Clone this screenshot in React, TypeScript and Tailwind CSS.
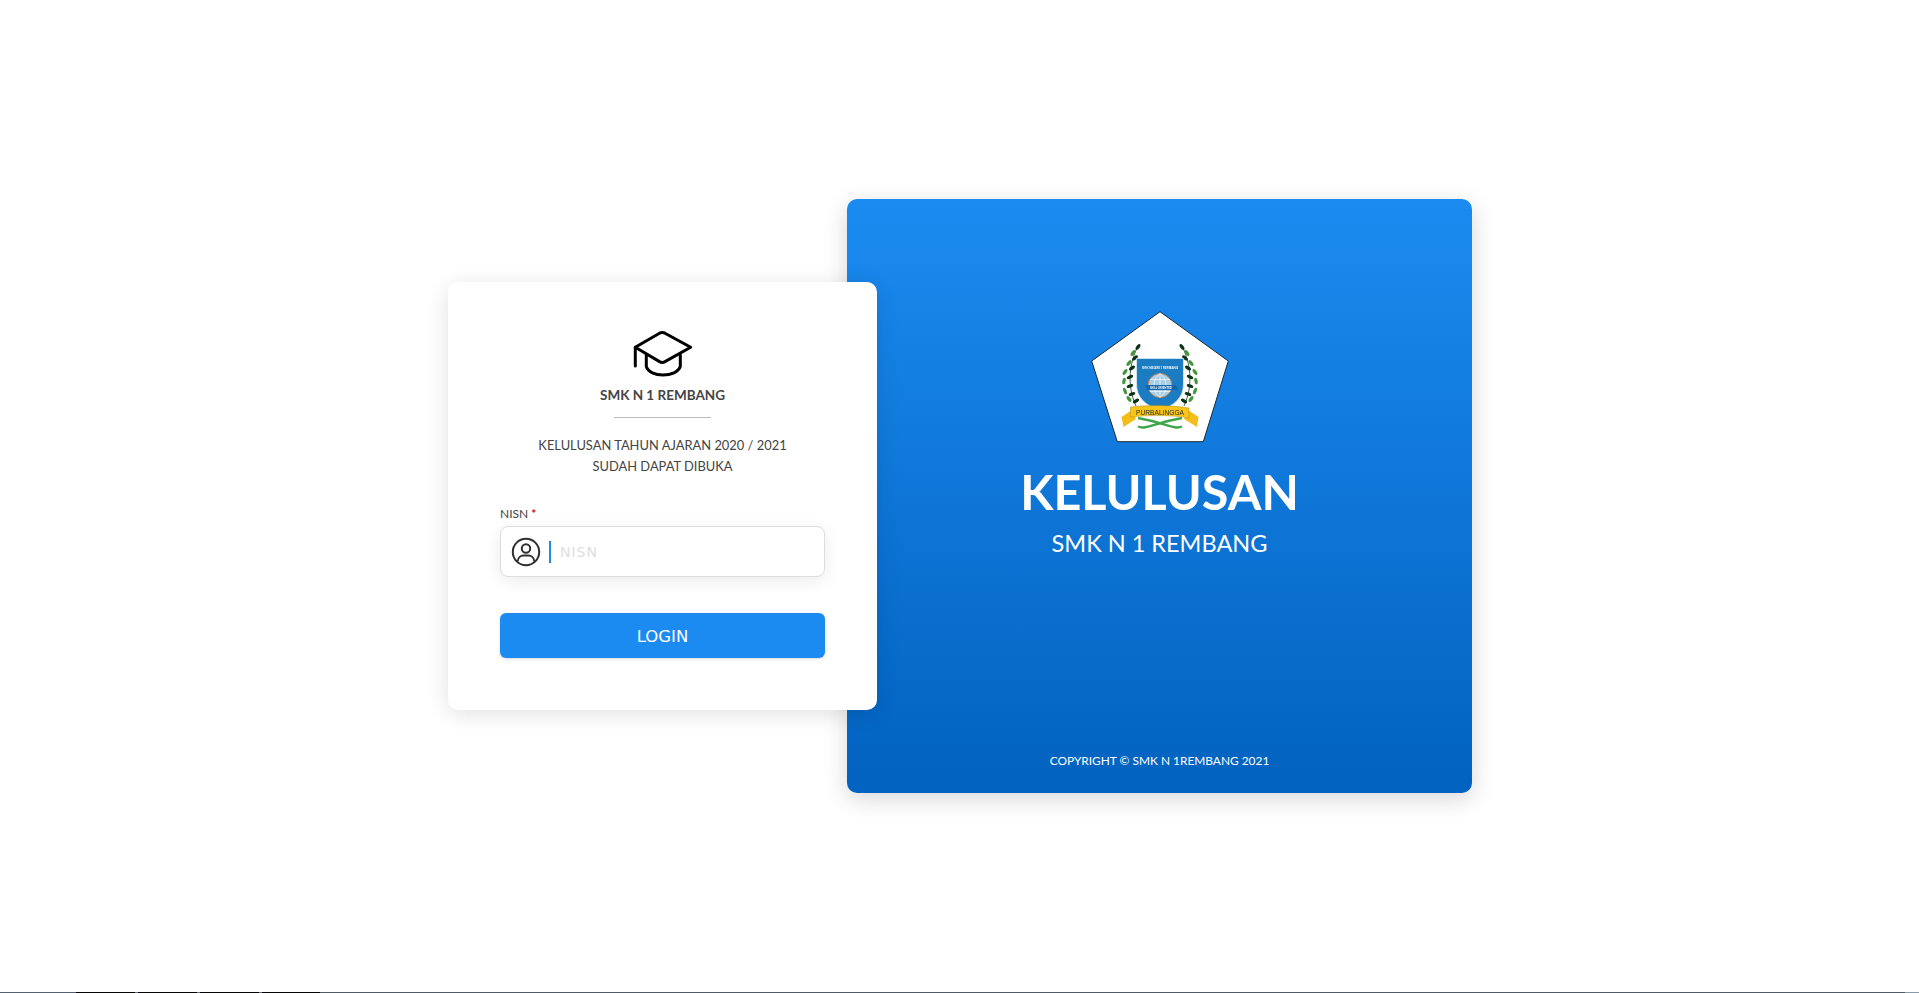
const stripParts = [
  { w: 'w-[76px]', c: 'bg-[#566170]' },
  { w: 'w-[59px]', c: 'bg-[#050505]' },
  { w: 'w-[3px]', c: 'bg-[#667080]' },
  { w: 'w-[59px]', c: 'bg-[#050505]' },
  { w: 'w-[3px]', c: 'bg-[#667080]' },
  { w: 'w-[59px]', c: 'bg-[#050505]' },
  { w: 'w-[3px]', c: 'bg-[#667080]' },
  { w: 'w-[58px]', c: 'bg-[#050505]' },
  { w: 'flex-1', c: 'bg-[#4f5a64]' },
  { w: 'w-[14px]', c: 'bg-[#8a9aa8]' },
];

// leaves along one laurel branch, left side (mirrored for the right)
const leaves = [
  [68, 47, 35], [63, 53, 35], [65, 58, 50], [59, 63, 40], [62, 68, 55], [55, 72, 35],
  [60, 77, 65], [54, 81, 10], [60, 86, 70], [55, 91, -20], [62, 94, 70], [59, 99, -35], [66, 101, 60],
];

function Laurel() {
  return (
    <g>
      <path d="M68 46 C60 62 56 84 66 106" fill="none" stroke="#14391c" strokeWidth="0.8" />
      {leaves.map(([x, y, r], i) => (
        <ellipse
          key={i}
          cx={x}
          cy={y}
          rx="1.7"
          ry="3.4"
          fill={i % 2 === 0 ? '#0b3315' : '#43963c'}
          transform={`rotate(${r} ${x} ${y})`}
        />
      ))}
    </g>
  );
}

function SchoolLogo() {
  return (
    <svg width="180" height="150" viewBox="0 0 180 150" className="block blur-[0.4px]">
      <polygon points="90,11.7 158.3,61 133.3,141.7 47.3,141.7 21.7,61" fill="#ffffff" stroke="#1c2a33" strokeWidth="1" />
      <Laurel />
      <g transform="matrix(-1 0 0 1 180 0)">
        <Laurel />
      </g>
      <path d="M66.5 58.5 H113.5 V84 C113.5 98 104 106 90 110 C76 106 66.5 98 66.5 84 Z" fill="#1b7cc1" stroke="#dbeaf3" strokeWidth="0.8" />
      <text x="90" y="69" textAnchor="middle" fontSize="3" fontFamily="Lato, sans-serif" fontWeight="700" fill="#ffffff">
        SMK NEGERI 1 REMBANG
      </text>
      <circle cx="90" cy="85.5" r="12" fill="#a9cfe8" stroke="#c9793f" strokeWidth="0.9" />
      <path d="M78 85.5 H102 M80 79.5 H100 M80 91.5 H100 M90 73.5 V97.5 M90 73.5 C82 79 82 92 90 97.5 M90 73.5 C98 79 98 92 90 97.5" fill="none" stroke="#ffffff" strokeWidth="0.6" />
      <path d="M75 85 H106 L108 90 H77 Z" fill="#1566ad" />
      <text x="91" y="88.6" textAnchor="middle" fontSize="2.8" fontFamily="Lato, sans-serif" fontWeight="700" fill="#ffffff">
        SKILL ORIENTED
      </text>
      <path d="M68 126.5 C76 130 84 123 112 118" fill="none" stroke="#3fa648" strokeWidth="2.4" />
      <path d="M112 126.5 C104 130 96 123 68 118" fill="none" stroke="#3fa648" strokeWidth="2.4" />
      <path d="M62 110 L51.5 117 L53.5 127 L66 119 Z" fill="#f5bd1a" />
      <path d="M118 110 L128.5 117 L127 127 L114 119 Z" fill="#f5bd1a" />
      <path d="M60.5 107 C80 105 100 105 119 108 V118 C100 115 80 115 60.5 117 Z" fill="#f8c31a" stroke="#a5800f" strokeWidth="0.4" />
      <text x="90" y="114.5" textAnchor="middle" fontSize="6.6" textLength="48" fontFamily="Liberation Sans, sans-serif" fill="#1b2a33">
        PURBALINGGA
      </text>
    </svg>
  );
}

function HatIcon() {
  return (
    <svg width="60" height="48" viewBox="0 0 60 48" fill="none" stroke="#000000" strokeWidth="3" strokeLinecap="round" strokeLinejoin="round">
      <path d="M2.3 17.3 L26.5 3.2 Q29.3 1.8 32 3.2 L57.7 17.3 L32 31.6 Q29.3 33.2 26.5 31.6 Z" />
      <path d="M2.3 17.3 V36" />
      <path d="M13.3 25 V36.5 C15 42 22 45 30 45 C38 45 45.5 42 47.3 36.5 V25" />
    </svg>
  );
}

function UserIcon() {
  return (
    <svg width="30" height="30" viewBox="0 0 30 30" fill="none" stroke="#2f2f2f" strokeWidth="2">
      <circle cx="15" cy="15" r="13.2" />
      <circle cx="15" cy="11.5" r="4.2" />
      <path d="M6.6 24.5 C7 20.5 10 18.6 12.5 18.6 H17.5 C20 18.6 23 20.5 23.4 24.5" />
    </svg>
  );
}

export default function App() {
  return (
    <div className="flex h-[993px] flex-col overflow-hidden bg-white font-['Lato',sans-serif]">
      <main className="flex h-[992px] items-center justify-center pl-px">

        {/* login card */}
        <section className="relative z-10 flex h-[428px] w-[429px] flex-col items-center rounded-[10px] bg-white px-[52px] pt-[48px] shadow-[0_4px_22px_rgba(0,0,0,0.12)]">
          <HatIcon />
          <h1 className="mt-[7px] text-[13.5px] leading-[21px] font-bold text-[#444444]">SMK N 1 REMBANG</h1>
          <div className="mt-[11px] h-px w-[97px] bg-[#bbbbbb]" />
          <p className="mt-[17px] text-center text-[12.9px] leading-[21px] text-[#444444]">
            KELULUSAN TAHUN AJARAN 2020 / 2021
            <br />
            SUDAH DAPAT DIBUKA
          </p>

          <div className="mt-[30px] w-full">
            <label className="block text-[12px] leading-[14px] text-[#444444]">
              NISN <span className="font-bold text-[#dd0000]">*</span>
            </label>
            <div className="mt-[5px] flex h-[51px] items-center rounded-[8px] border border-[#dddddd] bg-white pl-[10px] shadow-[0_4px_18px_rgba(0,0,0,0.08)]">
              <UserIcon />
              <span className="ml-[8px] h-[22px] w-[2px] shrink-0 bg-[#1b8bf1]" />
              <input
                placeholder="NISN"
                className="mt-[2px] ml-[9px] w-[240px] bg-transparent font-['DejaVu_Sans',sans-serif] text-[14px] tracking-[1px] outline-none placeholder:text-[#dedede]"
              />
            </div>
            <button className="mt-[36px] h-[45px] w-full rounded-[6px] bg-[#1b8bf1] pt-[3px] font-['DejaVu_Sans',sans-serif] text-[16.5px] text-white shadow-[0_1px_3px_rgba(0,0,0,0.15)]">
              LOGIN
            </button>
          </div>
        </section>

        {/* blue panel */}
        <section className="-ml-[30px] flex h-[594px] w-[625px] flex-col items-center rounded-[10px] bg-gradient-to-b from-[#1b8bf1] to-[#0262bf] pt-[101px] pb-[25px] text-white shadow-[0_6px_24px_rgba(0,0,0,0.16)]">
          <SchoolLogo />
          <h2 className="mt-[11px] text-[48.5px] leading-[60px] font-bold">KELULUSAN</h2>
          <p className="mt-[8px] text-[23.5px] leading-[29px]">SMK N 1 REMBANG</p>
          <p className="mt-auto text-[11.9px] leading-[15px]">COPYRIGHT © SMK N 1REMBANG 2021</p>
        </section>
      </main>

      <div className="flex h-px">
        {stripParts.map((p, i) => (
          <div key={i} className={`${p.w} ${p.c}`} />
        ))}
      </div>
    </div>
  );
}
